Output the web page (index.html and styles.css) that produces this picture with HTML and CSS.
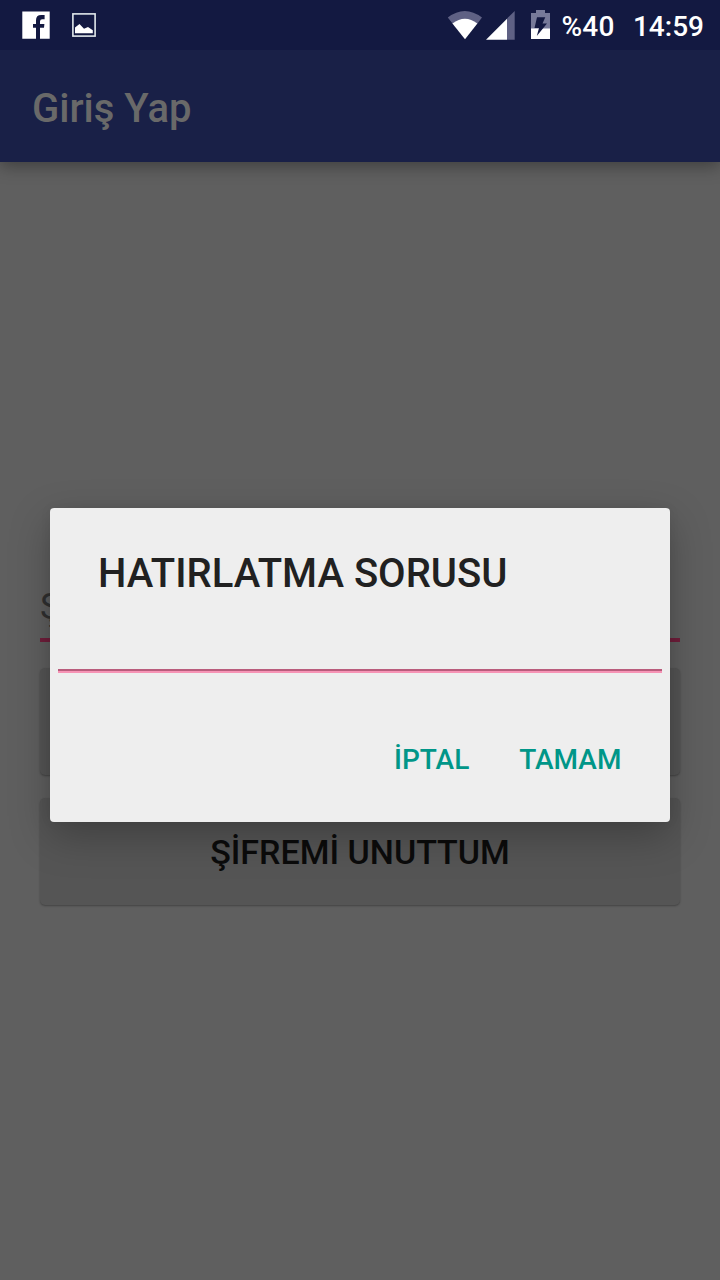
FILE: index.html
```html
<!DOCTYPE html>
<html lang="tr">
<head>
<meta charset="utf-8">
<title>Giriş Yap</title>
<link rel="stylesheet" href="styles.css">
</head>
<body>
<div class="screen">
  <header class="status-bar">
    <svg class="icon-facebook" width="28" height="28" viewBox="0 0 28 28"><path fill="#fff" d="M.3 .4H27.7V27.7H18V16.8H22L22.4 13H18V10.4Q18 8.2 20.2 8.2H22.6V4H19.2Q14 4 14 9.2V13H11V16.8H14V27.7H.3Z"/></svg>
    <svg class="icon-image" width="24" height="24" viewBox="0 0 24 24"><rect x=".9" y=".9" width="22.2" height="22.2" fill="none" stroke="#e2e8ec" stroke-width="1.6"/><path fill="#fff" d="M3 20.2V14.5L7.5 11 12 15.7 16 14 20.8 17.2V20.2Z"/></svg>
    <div class="indicators">
      <svg class="icon-wifi" width="36" height="30" viewBox="0 0 36 30"><path fill="#5f6184" d="M.8 6.6Q17.7-6.4 35 6.6L30.3 12.8Q18 4.5 5.7 12.8Z"/><path fill="#fff" d="M5.4 12.5Q18 3 30.4 12.5L18 28.2Z"/></svg>
      <svg class="icon-signal" width="29" height="29" viewBox="0 0 29 29"><path fill="#5f6184" d="M21 7.5 28.7 0V28.7H21Z"/><path fill="#fff" d="M0 28.7 21 7.7V28.7Z"/></svg>
      <svg class="icon-battery" width="19" height="29" viewBox="0 0 19 29"><path fill="#777a99" d="M5 0H14V3H19V19H0V3H5Z"/><path fill="#fff" d="M0 18.5H19V29H0Z"/><path fill="#131941" d="M6 7.3H14.3L11.5 13.6H16L5.8 26 8 18H3.5Z"/></svg>
      <span class="battery-level">%40</span>
      <span class="clock">14:59</span>
    </div>
  </header>
  <div class="app-bar"><h1 class="page-title">Giriş Yap</h1></div>
  <main class="form">
    <div class="password-field">Ş</div>
    <div class="form-button"></div>
    <div class="form-button"><span class="form-button-label">ŞİFREMİ UNUTTUM</span></div>
  </main>
  <section class="dialog">
    <h2 class="dialog-title">HATIRLATMA SORUSU</h2>
    <div class="answer-field"></div>
    <div class="dialog-actions">
      <span class="action">İPTAL</span>
      <span class="action">TAMAM</span>
    </div>
  </section>
</div>
</body>
</html>
```
FILE: styles.css
```css
* { box-sizing: border-box; }
body { margin: 0; font-family: Roboto, "Noto Sans", sans-serif; }
h1, h2 { margin: 0; font-weight: 500; }
svg { display: block; flex: none; }
.screen { position: relative; display: flex; flex-direction: column; width: 720px; height: 1280px; overflow: hidden; background: #5f5f5f; }
.status-bar { position: relative; z-index: 1; display: flex; align-items: flex-start; height: 50px; padding: 0 16px 0 22px; background: #131941; color: #fff; }
.icon-facebook { margin-top: 11px; }
.icon-image { margin: 13px 0 0 22px; }
.indicators { display: flex; flex: 1; justify-content: flex-end; font-size: 28px; font-weight: 500; line-height: 33px; }
.icon-wifi { margin-top: 11px; }
.icon-signal { margin: 11px 0 0 3px; }
.icon-battery { margin: 10px 11px 0 16px; }
.battery-level { width: 53px; margin: 10px 18.5px 0 0; letter-spacing: .3px; }
.clock { margin-top: 10px; }
.app-bar { position: relative; display: flex; align-items: center; height: 112px; padding: 6px 32px 0; background: #192047; box-shadow: 0 4px 16px rgba(0, 0, 0, .35); }
.page-title { color: #696969; font-size: 40px; line-height: 48px; }
.form { display: flex; flex-direction: column; align-items: center; padding-top: 416px; }
.password-field { width: 640px; height: 64px; border-bottom: 4px solid #701e3b; color: #303030; font-size: 36px; line-height: 58px; }
.form-button { display: flex; align-items: center; justify-content: center; width: 640px; height: 107px; margin-top: 26px; border-radius: 5px; background: #555; box-shadow: 0 1px 2px rgba(0, 0, 0, .3); }
.form-button + .form-button { margin-top: 23px; }
.form-button-label { color: #0b0b0b; font-size: 34px; font-weight: 500; }
.dialog { position: absolute; left: 50px; top: 508px; display: flex; flex-direction: column; width: 620px; height: 314px; padding: 0 8px; border-radius: 4px; background: #eee; box-shadow: 0 14px 40px rgba(0, 0, 0, .26), 0 0 12px rgba(0, 0, 0, .06); }
.dialog-title { padding: 42px 40px 0; color: #212121; font-size: 40px; line-height: 48px; white-space: nowrap; }
.answer-field { height: 75px; border-bottom: 2px solid #f693b5; box-shadow: inset 0 -2px #b95c7c; }
.dialog-actions { display: flex; justify-content: flex-end; gap: 50px; padding: 70px 40.6px 0 0; color: #009688; font-size: 28px; font-weight: 500; line-height: 33px; }
```
